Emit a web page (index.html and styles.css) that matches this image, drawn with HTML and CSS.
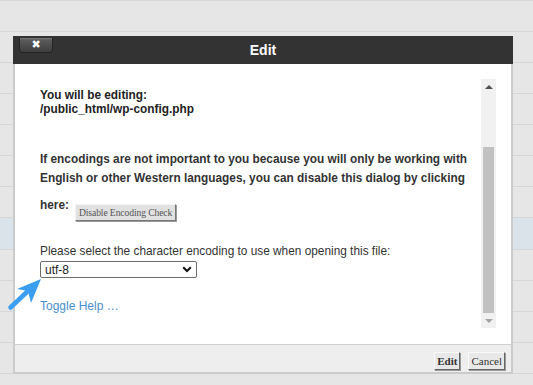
FILE: index.html
```html
<!DOCTYPE html>
<html>
<head>
<meta charset="utf-8">
<link rel="stylesheet" href="styles.css">
</head>
<body>
<div class="page">
  <div class="rows">
    <div class="row"></div><div class="row"></div><div class="row"></div><div class="row"></div>
    <div class="row"></div><div class="row"></div><div class="row"></div>
    <div class="row row-sel"></div>
    <div class="row"></div><div class="row"></div><div class="row"></div><div class="row"></div><div class="row"></div>
  </div>

  <div class="dialog">
    <div class="titlebar">
      <button class="close">&#x2716;</button>
      <span class="title">Edit</span>
    </div>
    <div class="body">
      <div class="content">
        <p class="editing">You will be editing:<br>/public_html/wp-config.php</p>
        <p class="note">If encodings are not important to you because you will only be working with English or other Western languages, you can disable this dialog by clicking</p>
        <div class="here"><span>here:</span><button class="btn-disable">Disable Encoding Check</button></div>
        <p class="label">Please select the character encoding to use when opening this file:</p>
        <div class="select-wrap">
          <select class="enc"><option>utf-8</option></select>
          <svg class="chev" width="10" height="7" viewBox="0 0 10 7"><path d="M1.2 1.2 L5 5 L8.8 1.2" fill="none" stroke="#111" stroke-width="2"/></svg>
        </div>
        <a class="toggle" href="#">Toggle Help …</a>
      </div>
      <div class="scrollbar">
        <div class="sb-up"></div>
        <div class="sb-track"><div class="sb-thumb"></div></div>
        <div class="sb-down"></div>
      </div>
    </div>
    <div class="footer">
      <button class="fbtn fbtn-edit">Edit</button>
      <button class="fbtn">Cancel</button>
    </div>
  </div>

  <svg class="arrow" width="50" height="50" viewBox="0 270 50 50">
    <line x1="29" y1="290" x2="10.5" y2="307.5" stroke="#3a9ef3" stroke-width="4.5" stroke-linecap="round"/>
    <polygon points="41,279 17,289 28,291 31,303" fill="#3a9ef3"/>
  </svg>
</div>
</body>
</html>
```

FILE: styles.css
```css
html, body {
  margin: 0;
  padding: 0;
}
body {
  font-family: "Liberation Sans", Arial, sans-serif;
  background: #e6e6e6;
}
.page {
  position: relative;
  width: 533px;
  height: 385px;
  overflow: hidden;
  background: #e6e6e6;
}
.rows {
  display: flex;
  flex-direction: column;
  border-top: 1px solid #d6d6d6;
}
.row {
  height: 30px;
  border-bottom: 1px solid #d6d6d6;
  background: #e6e6e6;
}
.row-sel {
  height: 31px;
  background: #dbe3ea;
}

/* dialog */
.dialog {
  position: absolute;
  left: 13px;
  top: 36px;
  width: 500px;
  display: flex;
  flex-direction: column;
}
.titlebar {
  position: relative;
  height: 28px;
  background: #333333;
  display: flex;
  align-items: center;
  justify-content: center;
}
.title {
  color: #ffffff;
  font-weight: bold;
  font-size: 14px;
}
.close {
  position: absolute;
  left: 6px;
  top: 2px;
  width: 34px;
  height: 15px;
  padding: 0;
  border: 1px solid #232323;
  border-top: none;
  border-radius: 0 0 4px 4px;
  background: linear-gradient(#7a7a7a 0px, #5a5a5a 2px, #3e3e3e 100%);
  color: #ffffff;
  font-size: 11px;
  font-family: "DejaVu Sans", sans-serif;
  line-height: 14px;
  text-align: center;
}
.body {
  height: 280px;
  box-sizing: border-box;
  background: #ffffff;
  border-left: 2px solid #cbcbcb;
  border-right: 2px solid #cbcbcb;
  padding: 15px 15px 16px 0;
  display: flex;
}
.content {
  flex: 1;
  padding: 9px 0 0 25px;
  color: #333333;
  font-size: 11.85px;
}
.editing {
  margin: 0;
  font-weight: bold;
  line-height: 14px;
  color: #222222;
}
.note {
  margin: 34px 0 0;
  font-weight: bold;
  line-height: 18.5px;
}
.here {
  margin-top: 9px;
  display: flex;
  align-items: flex-start;
  font-weight: bold;
  line-height: 18.5px;
}
.btn-disable {
  margin: 8px 0 0 6px;
  height: 17px;
  padding: 0 3px;
  font-family: "Liberation Serif", "Times New Roman", serif;
  font-size: 9.6px;
  letter-spacing: -0.1px;
  color: #555555;
  background: #e1e1e1;
  border: 1px solid;
  border-color: #f4f4f4 #777777 #777777 #f4f4f4;
  box-shadow: 1px 1px 0 #9a9a9a;
}
.label {
  margin: 23px 0 0;
  line-height: 14px;
}
.select-wrap {
  position: relative;
  width: 157px;
  margin-top: 3px;
}
.enc {
  appearance: none;
  -webkit-appearance: none;
  display: block;
  width: 157px;
  height: 17px;
  box-sizing: border-box;
  border: 1px solid #6e6e6e;
  border-radius: 2px;
  background: #ffffff;
  padding: 0 0 0 4px;
  font-family: "Liberation Sans", Arial, sans-serif;
  font-size: 12px;
  color: #222222;
}
.chev {
  position: absolute;
  right: 5px;
  top: 5px;
}
.toggle {
  display: inline-block;
  margin-top: 21px;
  color: #4a8fcb;
  text-decoration: none;
  font-size: 12px;
  line-height: 14px;
}

/* scrollbar */
.scrollbar {
  width: 15px;
  height: 249px;
  background: #f1f1f1;
  display: flex;
  flex-direction: column;
}
.sb-up, .sb-down {
  height: 15px;
  display: flex;
  align-items: center;
  justify-content: center;
}
.sb-up::before {
  content: "";
  border-left: 4px solid transparent;
  border-right: 4px solid transparent;
  border-bottom: 4px solid #505050;
}
.sb-down::before {
  content: "";
  border-left: 4px solid transparent;
  border-right: 4px solid transparent;
  border-top: 4px solid #a3a3a3;
}
.sb-track {
  flex: 1;
  padding: 0 2px;
  display: flex;
  flex-direction: column;
  justify-content: flex-end;
}
.sb-thumb {
  height: 166px;
  background: #c1c1c1;
}

/* footer */
.footer {
  height: 30px;
  box-sizing: border-box;
  background: #eeeeee;
  border-top: 1px solid #cfcfcf;
  border-left: 2px solid #cbcbcb;
  border-right: 2px solid #cbcbcb;
  border-bottom: 2px solid #cbcbcb;
  display: flex;
  justify-content: flex-end;
  align-items: flex-start;
  gap: 8px;
  padding: 7px 6px 0 0;
}
.fbtn {
  height: 18px;
  padding: 0 2px;
  font-family: "Liberation Serif", "Times New Roman", serif;
  font-size: 11px;
  color: #333333;
  background: #e8e8e8;
  border: 1px solid;
  border-color: #fafafa #666666 #666666 #fafafa;
  box-shadow: 1px 1px 0 #999999;
}
.fbtn-edit {
  font-weight: bold;
}

.arrow {
  position: absolute;
  left: 0;
  top: 270px;
}
```
